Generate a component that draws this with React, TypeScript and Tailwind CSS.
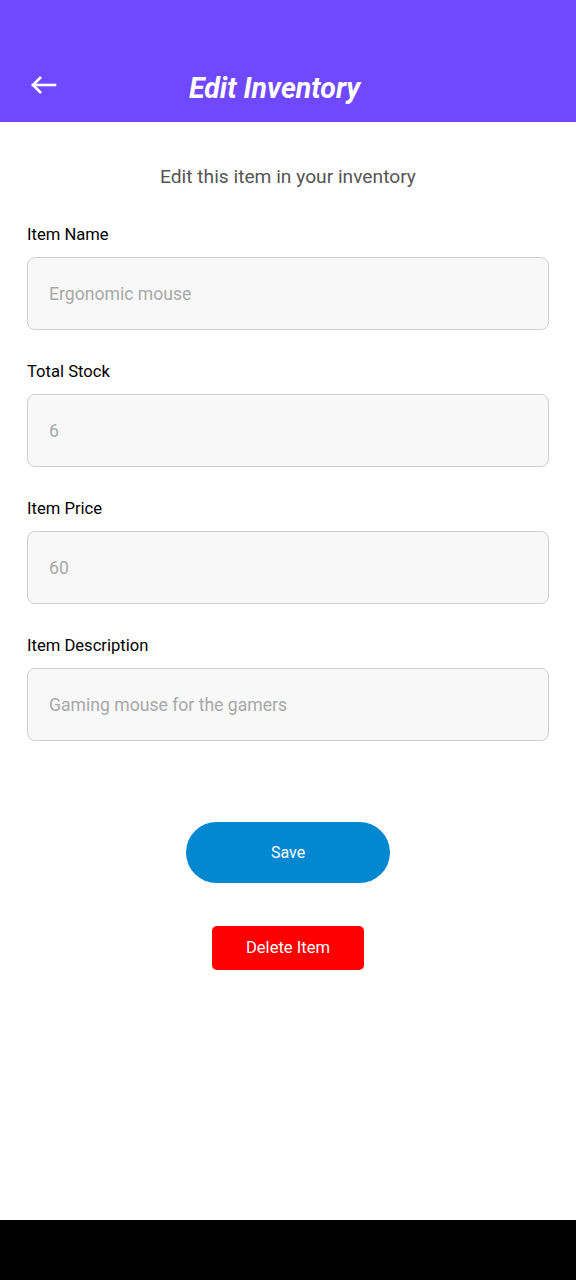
import React from "react";

const fields = [
  { label: "Item Name", value: "Ergonomic mouse" },
  { label: "Total Stock", value: "6" },
  { label: "Item Price", value: "60" },
  { label: "Item Description", value: "Gaming mouse for the gamers" },
];

export default function App() {
  return (
    <div
      className="flex min-h-[1280px] w-full flex-col bg-white"
      style={{ fontFamily: "Roboto, 'Noto Sans', sans-serif" }}
    >
      <header className="flex h-[122px] flex-col justify-end bg-[#6f48ff]">
        <div className="flex h-[74px] items-center">
          <svg
            className="ml-[30px]"
            width="28"
            height="20"
            viewBox="0 0 28 20"
            fill="none"
            stroke="white"
            strokeWidth="2.6"
            strokeLinecap="square"
          >
            <path d="M3 10 H25" />
            <path d="M11 2 L3 10 L11 18" strokeLinecap="butt" />
          </svg>
          <h1 className="ml-[131px] mt-[8px] text-[28.5px] font-bold italic leading-none text-white">
            Edit Inventory
          </h1>
        </div>
      </header>

      <p className="mt-[43px] text-center text-[19.2px] leading-[24px] text-[#555555]">
        Edit this item in your inventory
      </p>

      <div className="mt-[34px] flex flex-col gap-[30px] px-[27px]">
        {fields.map((f) => (
          <div key={f.label} className="flex flex-col">
            <label className="text-[16.6px] leading-[24px] text-black">{f.label}</label>
            <div className="mt-[10px] flex h-[73px] items-center rounded-[8px] border border-[#cfcfcf] bg-[#f8f8f8] px-[21px]">
              <span className="mt-[1px] text-[17.6px] text-[#a8a8a8]">{f.value}</span>
            </div>
          </div>
        ))}
      </div>

      <div className="mt-[81px] flex flex-col items-center">
        <button className="flex h-[61px] w-[204px] items-center justify-center rounded-full bg-[#0288d1] text-[16px] text-white">
          Save
        </button>
        <button className="mt-[43px] flex h-[44px] w-[152px] items-center justify-center rounded-[5px] bg-[#ff0000] text-[16.6px] text-white">
          Delete Item
        </button>
      </div>

      <div className="flex-1" />
      <div className="h-[60px] bg-black" />
    </div>
  );
}
